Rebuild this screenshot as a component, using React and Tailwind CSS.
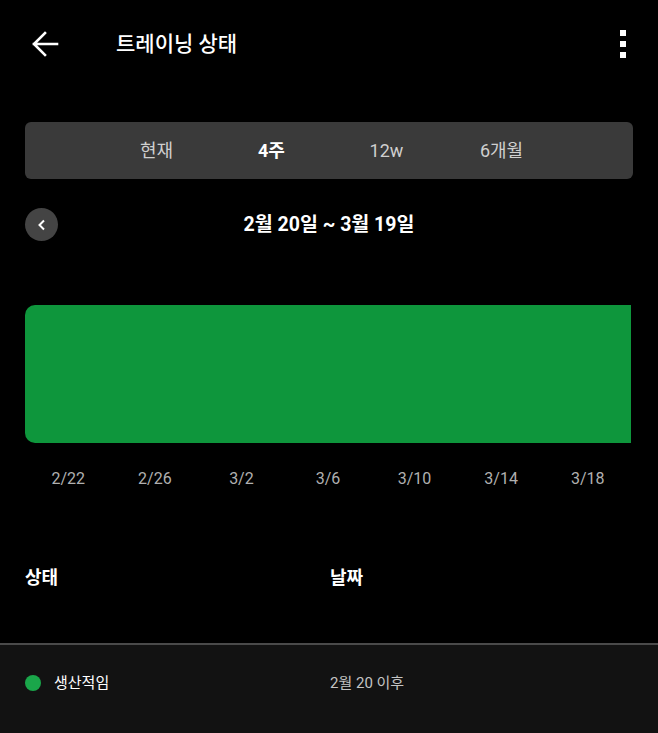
export default function App() {
  const font = { fontFamily: 'Roboto, "Noto Sans CJK KR", "Noto Sans", sans-serif' };
  const ticks = ["2/22", "2/26", "3/2", "3/6", "3/10", "3/14", "3/18"];
  const tabs = [
    { label: "현재", active: false },
    { label: "4주", active: true },
    { label: "12w", active: false },
    { label: "6개월", active: false },
  ];
  return (
    <div className="w-[658px] h-[733px] bg-black text-white overflow-hidden flex flex-col" style={font}>
      {/* Header */}
      <div className="h-[90px] flex items-center pl-[31px] pr-[31px]">
        <svg width="28" height="28" viewBox="0 0 28 28" className="-mt-[2px]">
          <path d="M26 14H3M14 3L3 14l11 11" stroke="#fff" strokeWidth="2.6" fill="none" strokeLinecap="square" />
        </svg>
        <div className="ml-[57px] text-[21px] font-medium leading-none -mt-[2px]">트레이닝 상태</div>
        <div className="ml-auto flex flex-col gap-[5px] -mt-[2px] pr-[1px]">
          <div className="w-[6px] h-[6px] bg-white" />
          <div className="w-[6px] h-[6px] bg-white" />
          <div className="w-[6px] h-[6px] bg-white" />
        </div>
      </div>

      {/* Segmented control */}
      <div className="mt-[32px] mx-[25px] h-[57px] rounded-[6px] bg-[#3a3a3a] flex items-center justify-center">
        {tabs.map((t) => (
          <div
            key={t.label}
            className={`w-[115px] text-center text-[18px] leading-none ${t.active ? "font-bold text-white" : "text-[#cfcfcf]"}`}
          >
            {t.label}
          </div>
        ))}
      </div>

      {/* Date row */}
      <div className="mt-[29px] mx-[25px] h-[33px] relative flex items-center justify-center">
        <div className="absolute left-0 top-0 w-[33px] h-[33px] rounded-full bg-[#444] flex items-center justify-center">
          <svg width="12" height="12" viewBox="0 0 12 12">
            <path d="M8 1.5L3.5 6L8 10.5" stroke="#fff" strokeWidth="2" fill="none" />
          </svg>
        </div>
        <div className="text-[19.5px] font-bold leading-none">2월 20일 ~ 3월 19일</div>
      </div>

      {/* Bar */}
      <div className="mt-[64px] ml-[25px] mr-[27px] h-[138px] bg-[#0e963c] rounded-l-[10px]" />

      {/* Axis */}
      <div className="mt-[26px] ml-[25px] mr-[27px] grid grid-cols-7">
        {ticks.map((t) => (
          <div key={t} className="text-center text-[16px] leading-[20px] text-[#b0b0b0]">
            {t}
          </div>
        ))}
      </div>

      {/* Table header */}
      <div className="mt-[78px] flex text-[18px] font-bold leading-[22px]">
        <div className="pl-[25px] w-[330px]">상태</div>
        <div>날짜</div>
      </div>

      {/* Divider */}
      <div className="mt-[54px] h-[2px] bg-[#4a4a4a]" />

      {/* Row */}
      <div className="flex-1 bg-[#121212] flex items-start">
        <div className="mt-[29px] flex items-center w-full">
          <div className="w-[330px] flex items-center pl-[25px]">
            <div className="w-[16px] h-[16px] rounded-full bg-[#1aa64a]" />
            <div className="ml-[13px] text-[15px] leading-[18px]">생산적임</div>
          </div>
          <div className="text-[15px] leading-[18px] text-[#c4c4c4]">2월 20 이후</div>
        </div>
      </div>
    </div>
  );
}
